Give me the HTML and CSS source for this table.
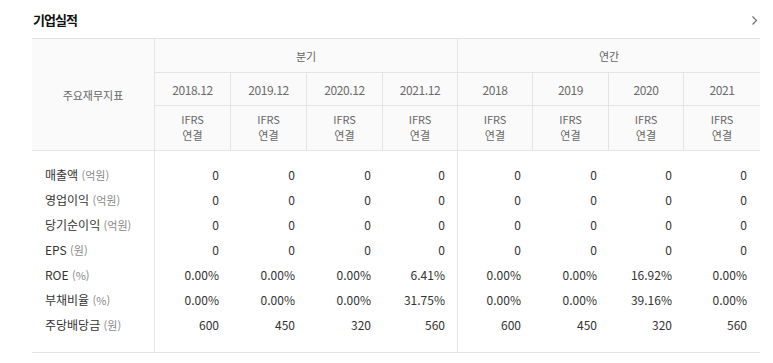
FILE: index.html
```html
<!DOCTYPE html>
<html lang="ko">
<head>
<meta charset="utf-8">
<title>기업실적</title>
<link rel="stylesheet" href="styles.css">
</head>
<body>
<section class="panel">
  <header class="head">
    <h2 class="title">기업실적</h2>
    <a class="more" href="#" aria-label="더보기">
      <svg width="7" height="11" viewBox="0 0 7 11"><polyline points="1.5,1.5 5.5,5.5 1.5,9.5" fill="none" stroke="#777" stroke-width="1.3"/></svg>
    </a>
  </header>
  <div class="fin">
    <div class="h hk corner">주요재무지표</div>
    <div class="h hk grp">분기</div>
    <div class="h hk grp last">연간</div>

    <div class="h hd">2018.12</div>
    <div class="h hd">2019.12</div>
    <div class="h hd">2020.12</div>
    <div class="h hd">2021.12</div>
    <div class="h hd">2018</div>
    <div class="h hd">2019</div>
    <div class="h hd">2020</div>
    <div class="h hd last">2021</div>

    <div class="h hk std">IFRS<br>연결</div>
    <div class="h hk std">IFRS<br>연결</div>
    <div class="h hk std">IFRS<br>연결</div>
    <div class="h hk std">IFRS<br>연결</div>
    <div class="h hk std">IFRS<br>연결</div>
    <div class="h hk std">IFRS<br>연결</div>
    <div class="h hk std">IFRS<br>연결</div>
    <div class="h hk std last">IFRS<br>연결</div>

    <div class="c lbl top">매출액 <span class="u">(억원)</span></div>
    <div class="c top">0</div><div class="c top">0</div><div class="c top">0</div><div class="c top sep">0</div>
    <div class="c top">0</div><div class="c top">0</div><div class="c top">0</div><div class="c top end">0</div>

    <div class="c lbl">영업이익 <span class="u">(억원)</span></div>
    <div class="c">0</div><div class="c">0</div><div class="c">0</div><div class="c sep">0</div>
    <div class="c">0</div><div class="c">0</div><div class="c">0</div><div class="c end">0</div>

    <div class="c lbl">당기순이익 <span class="u">(억원)</span></div>
    <div class="c">0</div><div class="c">0</div><div class="c">0</div><div class="c sep">0</div>
    <div class="c">0</div><div class="c">0</div><div class="c">0</div><div class="c end">0</div>

    <div class="c lbl">EPS <span class="u">(원)</span></div>
    <div class="c">0</div><div class="c">0</div><div class="c">0</div><div class="c sep">0</div>
    <div class="c">0</div><div class="c">0</div><div class="c">0</div><div class="c end">0</div>

    <div class="c lbl">ROE <span class="u">(%)</span></div>
    <div class="c">0.00%</div><div class="c">0.00%</div><div class="c">0.00%</div><div class="c sep">6.41%</div>
    <div class="c">0.00%</div><div class="c">0.00%</div><div class="c">16.92%</div><div class="c end">0.00%</div>

    <div class="c lbl">부채비율 <span class="u">(%)</span></div>
    <div class="c">0.00%</div><div class="c">0.00%</div><div class="c">0.00%</div><div class="c sep">31.75%</div>
    <div class="c">0.00%</div><div class="c">0.00%</div><div class="c">39.16%</div><div class="c end">0.00%</div>

    <div class="c lbl bot">주당배당금 <span class="u">(원)</span></div>
    <div class="c bot">600</div><div class="c bot">450</div><div class="c bot">320</div><div class="c bot sep">560</div>
    <div class="c bot">600</div><div class="c bot">450</div><div class="c bot">320</div><div class="c bot end">560</div>
  </div>
</section>
</body>
</html>
```
FILE: styles.css
```css
html, body {
  margin: 0;
  padding: 0;
  background: #fff;
}
body {
  font-family: "Noto Sans CJK KR", "Noto Sans", sans-serif;
  color: #333;
}
.panel {
  padding: 0 13px 0 32px;
}
.head {
  display: flex;
  align-items: center;
  justify-content: space-between;
  height: 38px;
}
.title {
  margin: 0 0 0 1px;
  font-size: 13px;
  font-weight: 700;
  letter-spacing: -1px;
  color: #111;
  line-height: 1;
}
.more {
  display: flex;
  margin-right: 2px;
  margin-top: 2px;
}
.fin {
  display: grid;
  grid-template-columns: 123px 76px 76px 76px 75px 75px 76px 75px 76px;
  grid-template-rows: 34px 33px 45px;
  grid-auto-rows: auto;
  border-top: 1px solid #e4e4e7;
}
.h {
  display: flex;
  align-items: center;
  justify-content: center;
  text-align: center;
  background: #fafafa;
  border-right: 1px solid #e4e4e7;
  border-bottom: 1px solid #e4e4e7;
  color: #666;
}
.h.last {
  border-right: 0;
}
.hk {
  font-size: 11px;
}
.hd {
  font-size: 12px;
  letter-spacing: -0.4px;
  color: #6a6a6a;
}
.corner {
  grid-row: span 3;
}
.grp {
  grid-column: span 4;
}
.std {
  line-height: 16px;
  padding-bottom: 2px;
}
.c {
  font-size: 12px;
  line-height: 25px;
  height: 25px;
  box-sizing: content-box;
  text-align: right;
  padding-right: 12px;
  color: #333;
  white-space: nowrap;
}
.c.end {
  padding-right: 13px;
}
.lbl {
  text-align: left;
  padding-left: 13px;
  padding-right: 0;
  color: #333;
  border-right: 1px solid #e4e4e7;
}
.sep {
  border-right: 1px solid #e4e4e7;
}
.u {
  font-size: 11px;
  line-height: 1;
  color: #888;
}
.top {
  padding-top: 11px;
}
.bot {
  padding-bottom: 15px;
  border-bottom: 1px solid #e4e4e7;
}
```
